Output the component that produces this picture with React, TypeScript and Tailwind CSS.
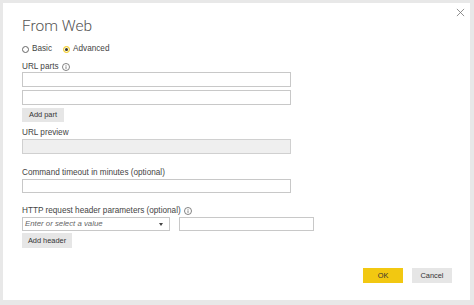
import { useState } from "react";

const font = { fontFamily: '"Liberation Sans", Arial, sans-serif' };

function InfoIcon() {
  return (
    <svg width="8" height="8" viewBox="0 0 10 10" className="ml-[3px] inline-block">
      <circle cx="5" cy="5" r="4.4" fill="none" stroke="#555" strokeWidth="0.9" />
      <rect x="4.55" y="4.2" width="0.9" height="3.2" fill="#555" />
      <rect x="4.55" y="2.6" width="0.9" height="0.9" fill="#555" />
    </svg>
  );
}

function Radio({ checked, label, onClick }: { checked: boolean; label: string; onClick: () => void }) {
  return (
    <button onClick={onClick} className="flex items-center gap-[3px] text-[8.2px] leading-[10px] text-[#444]">
      <span
        className={
          checked
            ? "flex h-[7px] w-[7px] items-center justify-center rounded-full border border-[#f2c811] bg-[#fdf6d4]"
            : "flex h-[7px] w-[7px] items-center justify-center rounded-full border border-[#666]"
        }
      >
        {checked && <span className="h-[3px] w-[3px] rounded-full bg-[#333]" />}
      </span>
      {label}
    </button>
  );
}

export default function App() {
  const [mode, setMode] = useState<"basic" | "advanced">("advanced");

  return (
    <div className="h-[305px] w-[474px] bg-[#e8e8e8] p-[3px] pr-[4px] pb-[5px]" style={font}>
      <div className="relative flex h-full w-full flex-col bg-white pl-[19px] pt-[13px]">
        {/* Close */}
        <button className="absolute right-[5px] top-[5px]">
          <svg width="9" height="9" viewBox="0 0 10 10">
            <path d="M1 1 L9 9 M9 1 L1 9" stroke="#777" strokeWidth="0.9" />
          </svg>
        </button>

        <h1
          className="text-[15.5px] font-light leading-[20px] text-[#555]"
          style={{ fontFamily: 'Roboto, "Liberation Sans", sans-serif' }}
        >
          From Web
        </h1>

        <div className="mt-[8px] flex h-[10px] items-center gap-[11px]">
          <Radio checked={mode === "basic"} label="Basic" onClick={() => setMode("basic")} />
          <Radio checked={mode === "advanced"} label="Advanced" onClick={() => setMode("advanced")} />
        </div>

        <div className="mt-[7px] flex items-center text-[8.2px] leading-[11px] text-[#444]">
          URL parts
          <InfoIcon />
        </div>
        <input className="h-[15px] w-[269px] border border-[#c8c8c8] outline-none" />
        <input className="mt-[3px] h-[15px] w-[269px] border border-[#c8c8c8] outline-none" />
        <button className="mt-[3px] h-[14px] w-[42px] bg-[#e6e6e6] text-[7.4px] text-[#333]">Add part</button>

        <div className="mt-[5px] text-[8.2px] leading-[11px] text-[#444]">URL preview</div>
        <div className="mt-[1px] h-[15px] w-[269px] border border-[#d0d0d0] bg-[#efefef]" />

        <div className="mt-[13px] text-[8.2px] leading-[11px] text-[#444]">Command timeout in minutes (optional)</div>
        <input className="mt-[1px] h-[14px] w-[269px] border border-[#c8c8c8] outline-none" />

        <div className="mt-[12px] flex items-center text-[8.2px] leading-[11px] text-[#444]">
          HTTP request header parameters (optional)
          <InfoIcon />
        </div>
        <div className="mt-[1px] flex gap-[9px]">
          <div className="flex h-[14px] w-[148px] items-center justify-between border border-[#c8c8c8] pl-[2px]">
            <span className="text-[7.8px] italic text-[#666]">Enter or select a value</span>
            <svg width="4" height="3" viewBox="0 0 4 3" className="mr-[6px]">
              <path d="M0 0 L4 0 L2 3 Z" fill="#444" />
            </svg>
          </div>
          <input className="h-[14px] w-[135px] border border-[#c8c8c8] outline-none" />
        </div>
        <button className="mt-[2px] h-[15px] w-[50px] bg-[#e6e6e6] text-[7.4px] text-[#333]">Add header</button>

        <div className="mt-[20px] flex justify-end gap-[9px] pr-[18px]">
          <button className="h-[15px] w-[40px] bg-[#f2c811] text-[7.4px] text-[#333]">OK</button>
          <button className="h-[15px] w-[40px] bg-[#e6e6e6] text-[7.4px] text-[#333]">Cancel</button>
        </div>
      </div>
    </div>
  );
}
